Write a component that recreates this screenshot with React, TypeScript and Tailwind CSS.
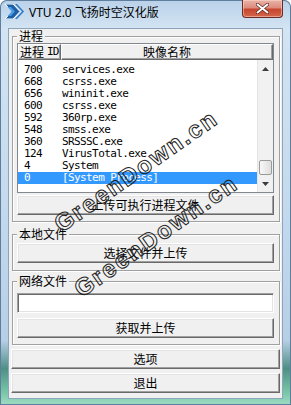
import React from "react";

const CJK = "font-['Noto_Sans','Noto_Sans_CJK_SC',sans-serif]";

function Btn({ children, className = "" }: { children: React.ReactNode; className?: string }) {
  return (
    <div
      className={
        "h-[20px] flex items-center justify-center bg-[#f0f0f0] border border-t-white border-l-white border-r-[#696969] border-b-[#696969] shadow-[inset_-1px_-1px_0_#a0a0a0,inset_1px_1px_0_#e3e3e3] text-[12px] leading-[14px] text-black font-['Noto_Sans_CJK_SC',sans-serif] " +
        className
      }
    >
      {children}
    </div>
  );
}

function Group({ label, children, className = "" }: { label: string; children: React.ReactNode; className?: string }) {
  return (
    <fieldset
      className={
        "border border-[#a0a0a0] pl-[4px] pr-[5px] shadow-[inset_1px_1px_0_#ffffff,1px_1px_0_#ffffff] " + className
      }
    >
      <legend className="px-[2px] bg-[#f0f0f0] text-[12px] leading-[14px] text-black font-['Noto_Sans_CJK_SC',sans-serif]">
        {label}
      </legend>
      {children}
    </fieldset>
  );
}

const rows: [string, string][] = [
  ["700", "services.exe"],
  ["668", "csrss.exe"],
  ["656", "wininit.exe"],
  ["600", "csrss.exe"],
  ["592", "360rp.exe"],
  ["548", "smss.exe"],
  ["360", "SRSSSC.exe"],
  ["124", "VirusTotal.exe"],
  ["4", "System"],
  ["0", "[System Process]"],
];

function ProcessList() {
  return (
    <div className="h-[150px] border border-[#828790] bg-white flex flex-col">
      <div className="h-[16px] flex bg-[#f0f0f0] text-[12px] leading-[14px] text-black font-['Noto_Sans_CJK_SC',sans-serif]">
        <div className="w-[43px] pl-[1px] flex items-center border border-t-white border-l-white border-r-[#696969] border-b-[#696969] shadow-[inset_-1px_-1px_0_#a0a0a0] whitespace-nowrap overflow-hidden">
          进程<span className="ml-[3px] font-['DejaVu_Sans_Mono',monospace] text-[11px] tracking-[-0.8px]">ID</span>
        </div>
        <div className="w-[212px] flex items-center justify-center border border-t-white border-l-white border-r-[#696969] border-b-[#696969] shadow-[inset_-1px_-1px_0_#a0a0a0]">
          映像名称
        </div>
      </div>
      <div className="flex flex-1 min-h-0">
        <div className="flex-1 pt-[4px] font-['DejaVu_Sans_Mono',monospace] text-[11px] leading-[12px] tracking-[-0.6px]">
          {rows.map(([pid, name], i) => {
            const sel = i === rows.length - 1;
            return (
              <div
                key={i}
                className={
                  sel
                    ? "h-[12px] flex bg-[#3399ff] text-white"
                    : "h-[12px] flex text-black"
                }
              >
                <div className="w-[43px] pl-[6px]">{pid}</div>
                <div className="pl-[1px] whitespace-nowrap">{name}</div>
              </div>
            );
          })}
        </div>
        <div className="w-[16px] flex flex-col bg-[#f1f1f1] border-l border-[#e4e4e4]">
          <div className="h-[17px] flex items-center justify-center">
            <svg width="7" height="4" viewBox="0 0 7 4">
              <polygon points="3.5,0 7,4 0,4" fill="#3c3c3c" />
            </svg>
          </div>
          <div className="flex-1 flex flex-col justify-end">
            <div className="h-[15px] mx-[1px] rounded-[2px] border border-[#9a9a9a] bg-gradient-to-r from-[#f8f8f8] to-[#dedede]" />
          </div>
          <div className="h-[17px] flex items-center justify-center">
            <svg width="7" height="4" viewBox="0 0 7 4">
              <polygon points="0,0 7,0 3.5,4" fill="#3c3c3c" />
            </svg>
          </div>
        </div>
      </div>
    </div>
  );
}

export default function App() {
  return (
    <div className="relative w-[291px] h-[405px] overflow-hidden rounded-t-[7px] bg-[linear-gradient(to_bottom,#b9d1e9_0%,#d3e4f3_7%,#c6dbee_45%,#b7cfe6_84%,#4f8f86_91%,#79c7a8_97%,#9fdcc4_100%)] shadow-[inset_0_0_0_1px_#5f7d9c] flex flex-col">
      {/* title bar */}
      <div className="h-[28px] flex items-start shrink-0">
        <div className="ml-[5px] mt-[4px]">
          <svg width="19" height="15" viewBox="0 0 19 15">
            <polygon points="0,0 8,0 15,7.5 8,15 0,15 7,7.5" fill="#1d5ea6" stroke="#ffffff" strokeWidth="1" />
            <polygon points="2.5,3 6,3 10,7.5 6,12 2.5,12 6.5,7.5" fill="#4b9be0" />
            <polygon points="10,0 12,0 19,7.5 12,15 10,15 17,7.5" fill="#2b78c8" />
          </svg>
        </div>
        <div className={"ml-[5px] mt-[6px] text-[12px] leading-[14px] text-black " + CJK}>
          VTU 2.0 飞扬时空汉化版
        </div>
        <div className="ml-auto mr-[8px] w-[41px] h-[18px] rounded-b-[4px] border border-t-0 border-[#6b2a22] bg-[linear-gradient(to_bottom,#eab3a8_0%,#dc8c7e_45%,#c8462f_55%,#d3664c_100%)] flex items-center justify-center shadow-[inset_0_0_0_1px_rgba(255,220,210,0.5)]">
          <svg width="13" height="11" viewBox="0 0 13 11">
            <path d="M1.5 1.5 L11.5 9.5 M11.5 1.5 L1.5 9.5" stroke="#5a2620" strokeWidth="3.4" strokeLinecap="round" />
            <path d="M1.5 1.5 L11.5 9.5 M11.5 1.5 L1.5 9.5" stroke="#ffffff" strokeWidth="2" strokeLinecap="round" />
          </svg>
        </div>
      </div>

      {/* client area */}
      <div className="ml-[8px] w-[275px] h-[371px] shrink-0 bg-[#f0f0f0] border border-[#8ea4ba] flex flex-col">
        <Group label="进程" className="ml-[3px] w-[268px] pb-[6px]">
          <ProcessList />
          <Btn className="mt-[2px]">上传可执行进程文件</Btn>
        </Group>

        <Group label="本地文件" className="ml-[3px] w-[268px] mt-[5px] pt-[2px] pb-[7px]">
          <Btn>选择文件并上传</Btn>
        </Group>

        <Group label="网络文件" className="ml-[3px] w-[268px] mt-[3px] pt-[5px] pb-[6px]">
          <div className="h-[20px] bg-white border border-t-[#a0a0a0] border-l-[#a0a0a0] border-r-white border-b-white shadow-[inset_1px_1px_0_#696969,inset_-1px_-1px_0_#e3e3e3]" />
          <Btn className="mt-[5px]">获取并上传</Btn>
        </Group>

        <Btn className="ml-[2px] w-[269px] mt-[4px]">选项</Btn>
        <Btn className="ml-[2px] w-[269px] mt-[4px]">退出</Btn>
      </div>

      {/* watermark */}
      <span className="pointer-events-none absolute left-[136px] top-[171px] -translate-x-1/2 -translate-y-1/2 rotate-[-35deg] whitespace-nowrap text-[24px] leading-none font-bold tracking-[2px] text-transparent font-['Liberation_Sans',sans-serif] [-webkit-text-stroke:1px_#222222]">
        GreenDown.cn
      </span>
      <span className="pointer-events-none absolute left-[156px] top-[236px] -translate-x-1/2 -translate-y-1/2 rotate-[-35deg] whitespace-nowrap text-[24px] leading-none font-bold tracking-[2px] text-transparent font-['Liberation_Sans',sans-serif] [-webkit-text-stroke:1px_#222222]">
        GreenDown.cn
      </span>
    </div>
  );
}
